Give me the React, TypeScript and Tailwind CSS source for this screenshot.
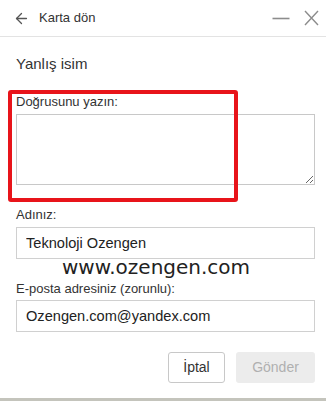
import { ArrowLeft } from 'lucide-react'

export default function App() {
  return (
    <div className="relative h-[401px] w-[326px] overflow-hidden bg-white font-['Liberation_Sans',Arial,sans-serif] text-[#333]">
      {/* Header */}
      <div className="flex h-[37px] items-center border-b border-[#e3e3e3] pl-[13px] pr-[7px]">
        <ArrowLeft size={17} strokeWidth={1.8} className="text-[#555]" />
        <span className="ml-[9px] text-[13px] text-[#333]">Karta dön</span>
        <div className="ml-auto flex items-center gap-[14px]">
          <svg width="18" height="16" viewBox="0 0 18 16">
            <path d="M0.5 8.5 H17.5" stroke="#8c8c8c" strokeWidth="1.6" />
          </svg>
          <svg width="15" height="16" viewBox="0 0 15 16">
            <path d="M1 1 L14 15 M14 1 L1 15" stroke="#8c8c8c" strokeWidth="1.4" />
          </svg>
        </div>
      </div>

      <div className="px-[16px] pr-[11px]">
        <div className="mt-[18px] text-[15px] leading-[18px] text-[#333]">Yanlış isim</div>

        <label className="mt-[21px] block text-[13px] leading-[16px] text-[#333]">Doğrusunu yazın:</label>
        <textarea className="mt-[4px] block h-[71px] w-full resize-y border border-[#c8c8c8] bg-white" />

        <label className="mt-[22px] block text-[13px] leading-[16px] text-[#333]">Adınız:</label>
        <input
          defaultValue="Teknoloji Ozengen"
          className="mt-[4px] block h-[32px] w-full border border-[#d0d0d0] px-[9px] text-[14.6px] text-[#222] outline-none"
        />

        <label className="mt-[22px] block text-[13px] leading-[16px] text-[#333]">E-posta adresiniz (zorunlu):</label>
        <input
          defaultValue="Ozengen.com@yandex.com"
          className="mt-[3px] block h-[32px] w-full border border-[#d0d0d0] px-[9px] text-[14.6px] text-[#222] outline-none"
        />

        <div className="mt-[20px] flex justify-end gap-[11px]">
          <button className="h-[31px] w-[57px] rounded-[3px] border border-[#c8c8c8] bg-white text-[14px] text-[#333]">İptal</button>
          <button className="h-[31px] w-[79px] rounded-[3px] bg-[#ececec] text-[14px] text-[#b0b0b0]">Gönder</button>
        </div>
      </div>

      {/* red highlight */}
      <div className="pointer-events-none absolute left-[8px] top-[90px] h-[112px] w-[230px] rounded-[3px] border-[4px] border-[#e8141a]" />

      {/* watermark */}
      <div className="pointer-events-none absolute left-[62px] top-[255px] font-['DejaVu_Sans',Verdana,sans-serif] text-[20px] leading-[24px] text-[#222]">
        www.ozengen.com
      </div>

      {/* bottom edge */}
      <div className="absolute bottom-0 left-0 h-[3px] w-full bg-[#c4c4bc]" />
    </div>
  )
}
